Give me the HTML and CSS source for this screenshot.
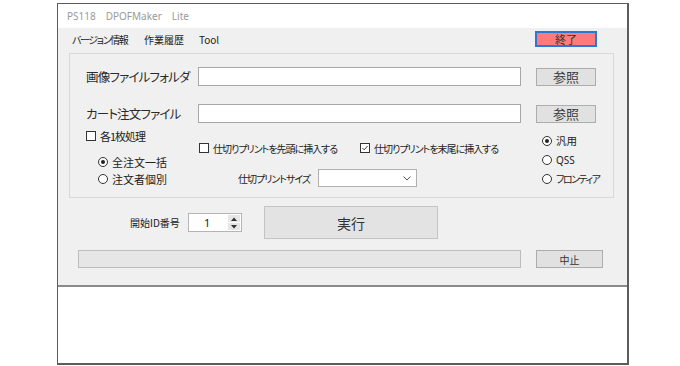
FILE: index.html
```html
<!DOCTYPE html>
<html lang="ja">
<head>
<meta charset="utf-8">
<title>DPOFMaker Lite</title>
<link rel="stylesheet" href="styles.css">
</head>
<body>
<div class="window">
  <div class="titlebar"><span>PS118</span><span>DPOFMaker</span><span>Lite</span></div>
  <div class="client">
    <div class="menubar">
      <span class="menu-item m1">バージョン情報</span>
      <span class="menu-item m2">作業履歴</span>
      <span class="menu-item">Tool</span>
      <span class="btn btn-exit">終了</span>
    </div>
    <div class="panel">
      <div class="file-row">
        <span class="file-label">画像ファイルフォルダ</span>
        <span class="textbox"></span>
        <span class="btn btn-ref">参照</span>
      </div>
      <div class="file-row row2">
        <span class="file-label">カート注文ファイル</span>
        <span class="textbox"></span>
        <span class="btn btn-ref">参照</span>
      </div>
      <div class="options">
        <div class="col-a">
          <div class="check"><span class="box"></span><span class="t-each">各1枚処理</span></div>
          <div class="radios-a">
            <div class="radio on"><span class="dot"></span>全注文一括</div>
            <div class="radio"><span class="dot"></span>注文者個別</div>
          </div>
        </div>
        <div class="col-b">
          <div class="checks-b">
            <div class="check check1"><span class="box"></span><span class="t-kana">仕切りプリントを先頭に挿入する</span></div>
            <div class="check"><span class="box"><svg viewBox="0 0 10 10" width="10" height="10"><polyline points="1.8,5 4,7.3 8.3,2.4" fill="none" stroke="#222" stroke-width="1.1"/></svg></span><span class="t-kana">仕切りプリントを末尾に挿入する</span></div>
          </div>
          <div class="size-row">
            <span class="size-label t-kana">仕切プリントサイズ</span>
            <span class="select"><svg viewBox="0 0 8 5" width="8" height="5"><polyline points="0.5,0.5 4,4 7.5,0.5" fill="none" stroke="#555" stroke-width="1"/></svg></span>
          </div>
        </div>
        <div class="col-c">
          <div class="radio r-c on"><span class="dot"></span>汎用</div>
          <div class="radio r-c"><span class="dot"></span><span class="t-latin">QSS</span></div>
          <div class="radio r-c"><span class="dot"></span><span class="t-front">フロンティア</span></div>
        </div>
      </div>
    </div>
    <div class="exec-row">
      <span class="id-label">開始ID番号</span>
      <span class="spin">
        <span class="spin-val">1</span>
        <span class="spin-btns">
          <span class="spin-btn"><svg viewBox="0 0 6 4" width="6" height="4"><polygon points="0,4 3,0.5 6,4" fill="#333"/></svg></span>
          <span class="spin-btn"><svg viewBox="0 0 6 4" width="6" height="4"><polygon points="0,0 3,3.5 6,0" fill="#333"/></svg></span>
        </span>
      </span>
      <span class="btn btn-exec">実行</span>
    </div>
    <div class="progress-row">
      <span class="progress"></span>
      <span class="btn btn-stop">中止</span>
    </div>
  </div>
  <div class="log"></div>
</div>
</body>
</html>
```

FILE: styles.css
```css
* { box-sizing: border-box; }

html, body {
  margin: 0;
  padding: 0;
  background: #ffffff;
}

body {
  width: 680px;
  height: 366px;
  overflow: hidden;
  font-family: "Noto Sans CJK JP", "Noto Sans", sans-serif;
  font-feature-settings: "palt";
  color: #222;
}

.window {
  margin: 3px 0 0 57px;
  width: 572px;
  height: 362px;
  border: 1px solid #5c5c5c;
  border-right-width: 2px;
  border-bottom-width: 2px;
  background: #fff;
  display: flex;
  flex-direction: column;
}

.titlebar {
  height: 24px;
  padding-left: 9px;
  display: flex;
  align-items: center;
  gap: 10px;
  font-family: "Noto Sans", sans-serif;
  font-size: 10px;
  color: #9a9a9a;
}

.client {
  height: 259px;
  background: #f0f0f0;
  border-bottom: 2px solid #8a8a8a;
}

.log {
  flex: 1;
  background: #fff;
}

.menubar {
  height: 22px;
  padding-left: 14px;
  display: flex;
  align-items: center;
  font-size: 10px;
}

.menu-item { white-space: nowrap; }
.m1 { width: 72px; letter-spacing: -1.4px; }
.m2 { width: 55px; }

.btn {
  display: flex;
  align-items: center;
  justify-content: center;
  background: #e1e1e1;
  border: 1px solid #adadad;
  color: #333;
}

.btn-exit {
  margin-left: auto;
  margin-right: 30px;
  width: 62px;
  height: 16px;
  background: #ff7b7b;
  border: 2px solid #2b78d4;
  font-size: 11px;
}

.panel {
  margin: 3px 0 0 11px;
  width: 545px;
  height: 145px;
  border: 1px solid #d9d9d9;
  padding: 13px 0 0 16px;
}

.file-row {
  display: flex;
  align-items: center;
  height: 19px;
}

.row2 { margin-top: 18px; }

.file-label {
  width: 112px;
  font-size: 12.5px;
  letter-spacing: -0.8px;
  white-space: nowrap;
  color: #2a2a2a;
}

.textbox {
  width: 323px;
  height: 19px;
  background: #fff;
  border: 1px solid #a8a8a8;
}

.btn-ref {
  margin-left: 15px;
  width: 60px;
  height: 18px;
  font-size: 13px;
  color: #3a3a3a;
}

.options {
  display: flex;
  font-size: 11px;
}

.t-each { letter-spacing: -1px; }
.t-kana { font-size: 10px; letter-spacing: -1px; }
.t-latin { font-family: "Noto Sans", sans-serif; font-size: 10px; }
.t-front { font-size: 10px; letter-spacing: -1.5px; }

.col-a { width: 113px; padding-top: 6px; }
.col-b { width: 343px; padding-top: 18px; }
.col-c { padding-top: 8px; }

.check, .radio {
  display: flex;
  align-items: center;
  white-space: nowrap;
}

.check { height: 14px; }
.check1 { width: 161px; }

.box {
  width: 10px;
  height: 10px;
  border: 1px solid #333;
  background: #fff;
  margin-right: 4px;
  flex: none;
  display: flex;
  align-items: center;
  justify-content: center;
}

.box svg { display: block; }

.radios-a { margin: 10px 0 0 12px; }
.radio { height: 17px; }
.r-c { height: 19px; font-size: 10.5px; }

.dot {
  width: 10px;
  height: 10px;
  border: 1px solid #333;
  border-radius: 50%;
  background: #fff;
  margin-right: 4px;
  flex: none;
  display: flex;
  align-items: center;
  justify-content: center;
}

.radio.on .dot::after {
  content: "";
  width: 4px;
  height: 4px;
  border-radius: 50%;
  background: #222;
}

.checks-b { display: flex; }

.size-row {
  display: flex;
  align-items: center;
  margin: 14px 0 0 39px;
  height: 18px;
}

.size-label { width: 80px; white-space: nowrap; }

.select {
  width: 99px;
  height: 18px;
  background: #fff;
  border: 1px solid #b0b0b0;
  display: flex;
  align-items: center;
  justify-content: flex-end;
  padding-right: 5px;
}

.select svg { display: block; }

.exec-row {
  display: flex;
  align-items: center;
  margin: 8px 0 0 72px;
  height: 33px;
}

.id-label {
  width: 58px;
  font-size: 10px;
  white-space: nowrap;
}

.spin {
  width: 54px;
  height: 19px;
  background: #fff;
  border: 1px solid #b4b4b4;
  display: flex;
  align-items: stretch;
}

.spin-val {
  flex: 1;
  padding-left: 15px;
  font-size: 11px;
  display: flex;
  align-items: center;
  font-family: "Noto Sans", sans-serif;
}

.spin-btns {
  width: 12px;
  margin: 1px;
  display: flex;
  flex-direction: column;
  gap: 1px;
}

.spin-btn {
  flex: 1;
  background: #e6e6e6;
  display: flex;
  align-items: center;
  justify-content: center;
}

.spin-btn svg { display: block; }

.btn-exec {
  margin-left: 22px;
  width: 174px;
  height: 33px;
  font-size: 14px;
  background: #e3e3e3;
  border-color: #c4c4c4;
}

.progress-row {
  display: flex;
  align-items: center;
  margin: 11px 0 0 20px;
}

.progress {
  width: 443px;
  height: 18px;
  background: #e6e6e6;
  border: 1px solid #bcbcbc;
}

.btn-stop {
  margin-left: 15px;
  width: 67px;
  height: 18px;
  font-size: 10px;
}
```
